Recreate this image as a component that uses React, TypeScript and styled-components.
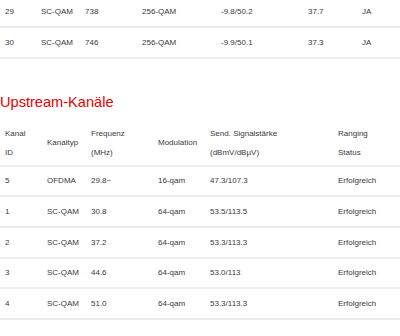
import React from 'react';
import styled, { createGlobalStyle } from 'styled-components';

const GlobalStyle = createGlobalStyle`
    body {
        margin: 0;
        background: #ffffff;
        font-family: 'Liberation Sans', Arial, sans-serif;
        color: #3a3a3a;
    }
`;

const Page = styled.div`
    width: 400px;
    height: 336px;
    overflow: hidden;
`;

const Table = styled.div<{ offset?: number }>`
    margin-top: ${props => props.offset ?? 0}px;
`;

const Row = styled.div<{ cols: string; height: number }>`
    display: grid;
    grid-template-columns: ${props => props.cols};
    align-items: center;
    box-sizing: border-box;
    height: ${props => props.height}px;
    border-bottom: 2px solid #ececec;
    font-size: 8px;
`;

const HeadRow = styled(Row)`
    padding: 3px 0;
    line-height: 19px;
`;

const Cell = styled.div`
    padding-left: 5px;
    white-space: nowrap;
`;

const Heading = styled.h2`
    margin: 33px 0 8.5px 0;
    font-family: 'Liberation Sans', Arial, sans-serif;
    font-weight: 400;
    font-size: 14.6px;
    line-height: 20px;
    color: #e60000;
`;

const DOWN_COLS = '36px 44px 57px 79px 87px 54px 1fr';
const UP_COLS = '42px 44px 67px 52px 128px 1fr';

const downstream = [
    ['29', 'SC-QAM', '738', '256-QAM', '-9.8/50.2', '37.7', 'JA'],
    ['30', 'SC-QAM', '746', '256-QAM', '-9.9/50.1', '37.3', 'JA'],
];

const upstream = [
    ['5', 'OFDMA', '29.8~', '16-qam', '47.3/107.3', 'Erfolgreich'],
    ['1', 'SC-QAM', '30.8', '64-qam', '53.5/113.5', 'Erfolgreich'],
    ['2', 'SC-QAM', '37.2', '64-qam', '53.3/113.3', 'Erfolgreich'],
    ['3', 'SC-QAM', '44.6', '64-qam', '53.0/113', 'Erfolgreich'],
    ['4', 'SC-QAM', '51.0', '64-qam', '53.3/113.3', 'Erfolgreich'],
];

const upHeaders: React.ReactNode[] = [
    <>Kanal<br />ID</>,
    'Kanaltyp',
    <>Frequenz<br />(MHz)</>,
    'Modulation',
    <>Send. Signalstärke<br />(dBmV/dBµV)</>,
    <>Ranging<br />Status</>,
];

const App = () => (
    <Page>
        <GlobalStyle />
        <Table offset={-3}>
            {downstream.map(row => (
                <Row key={row[0]} cols={DOWN_COLS} height={31}>
                    {row.map((v, i) => (
                        <Cell key={i}>{v}</Cell>
                    ))}
                </Row>
            ))}
        </Table>
        <Heading>Upstream-Kanäle</Heading>
        <Table>
            <HeadRow cols={UP_COLS} height={46}>
                {upHeaders.map((h, i) => (
                    <Cell key={i}>{h}</Cell>
                ))}
            </HeadRow>
            {upstream.map(row => (
                <Row key={row[0]} cols={UP_COLS} height={30.7}>
                    {row.map((v, i) => (
                        <Cell key={i}>{v}</Cell>
                    ))}
                </Row>
            ))}
        </Table>
    </Page>
);

export default App;
